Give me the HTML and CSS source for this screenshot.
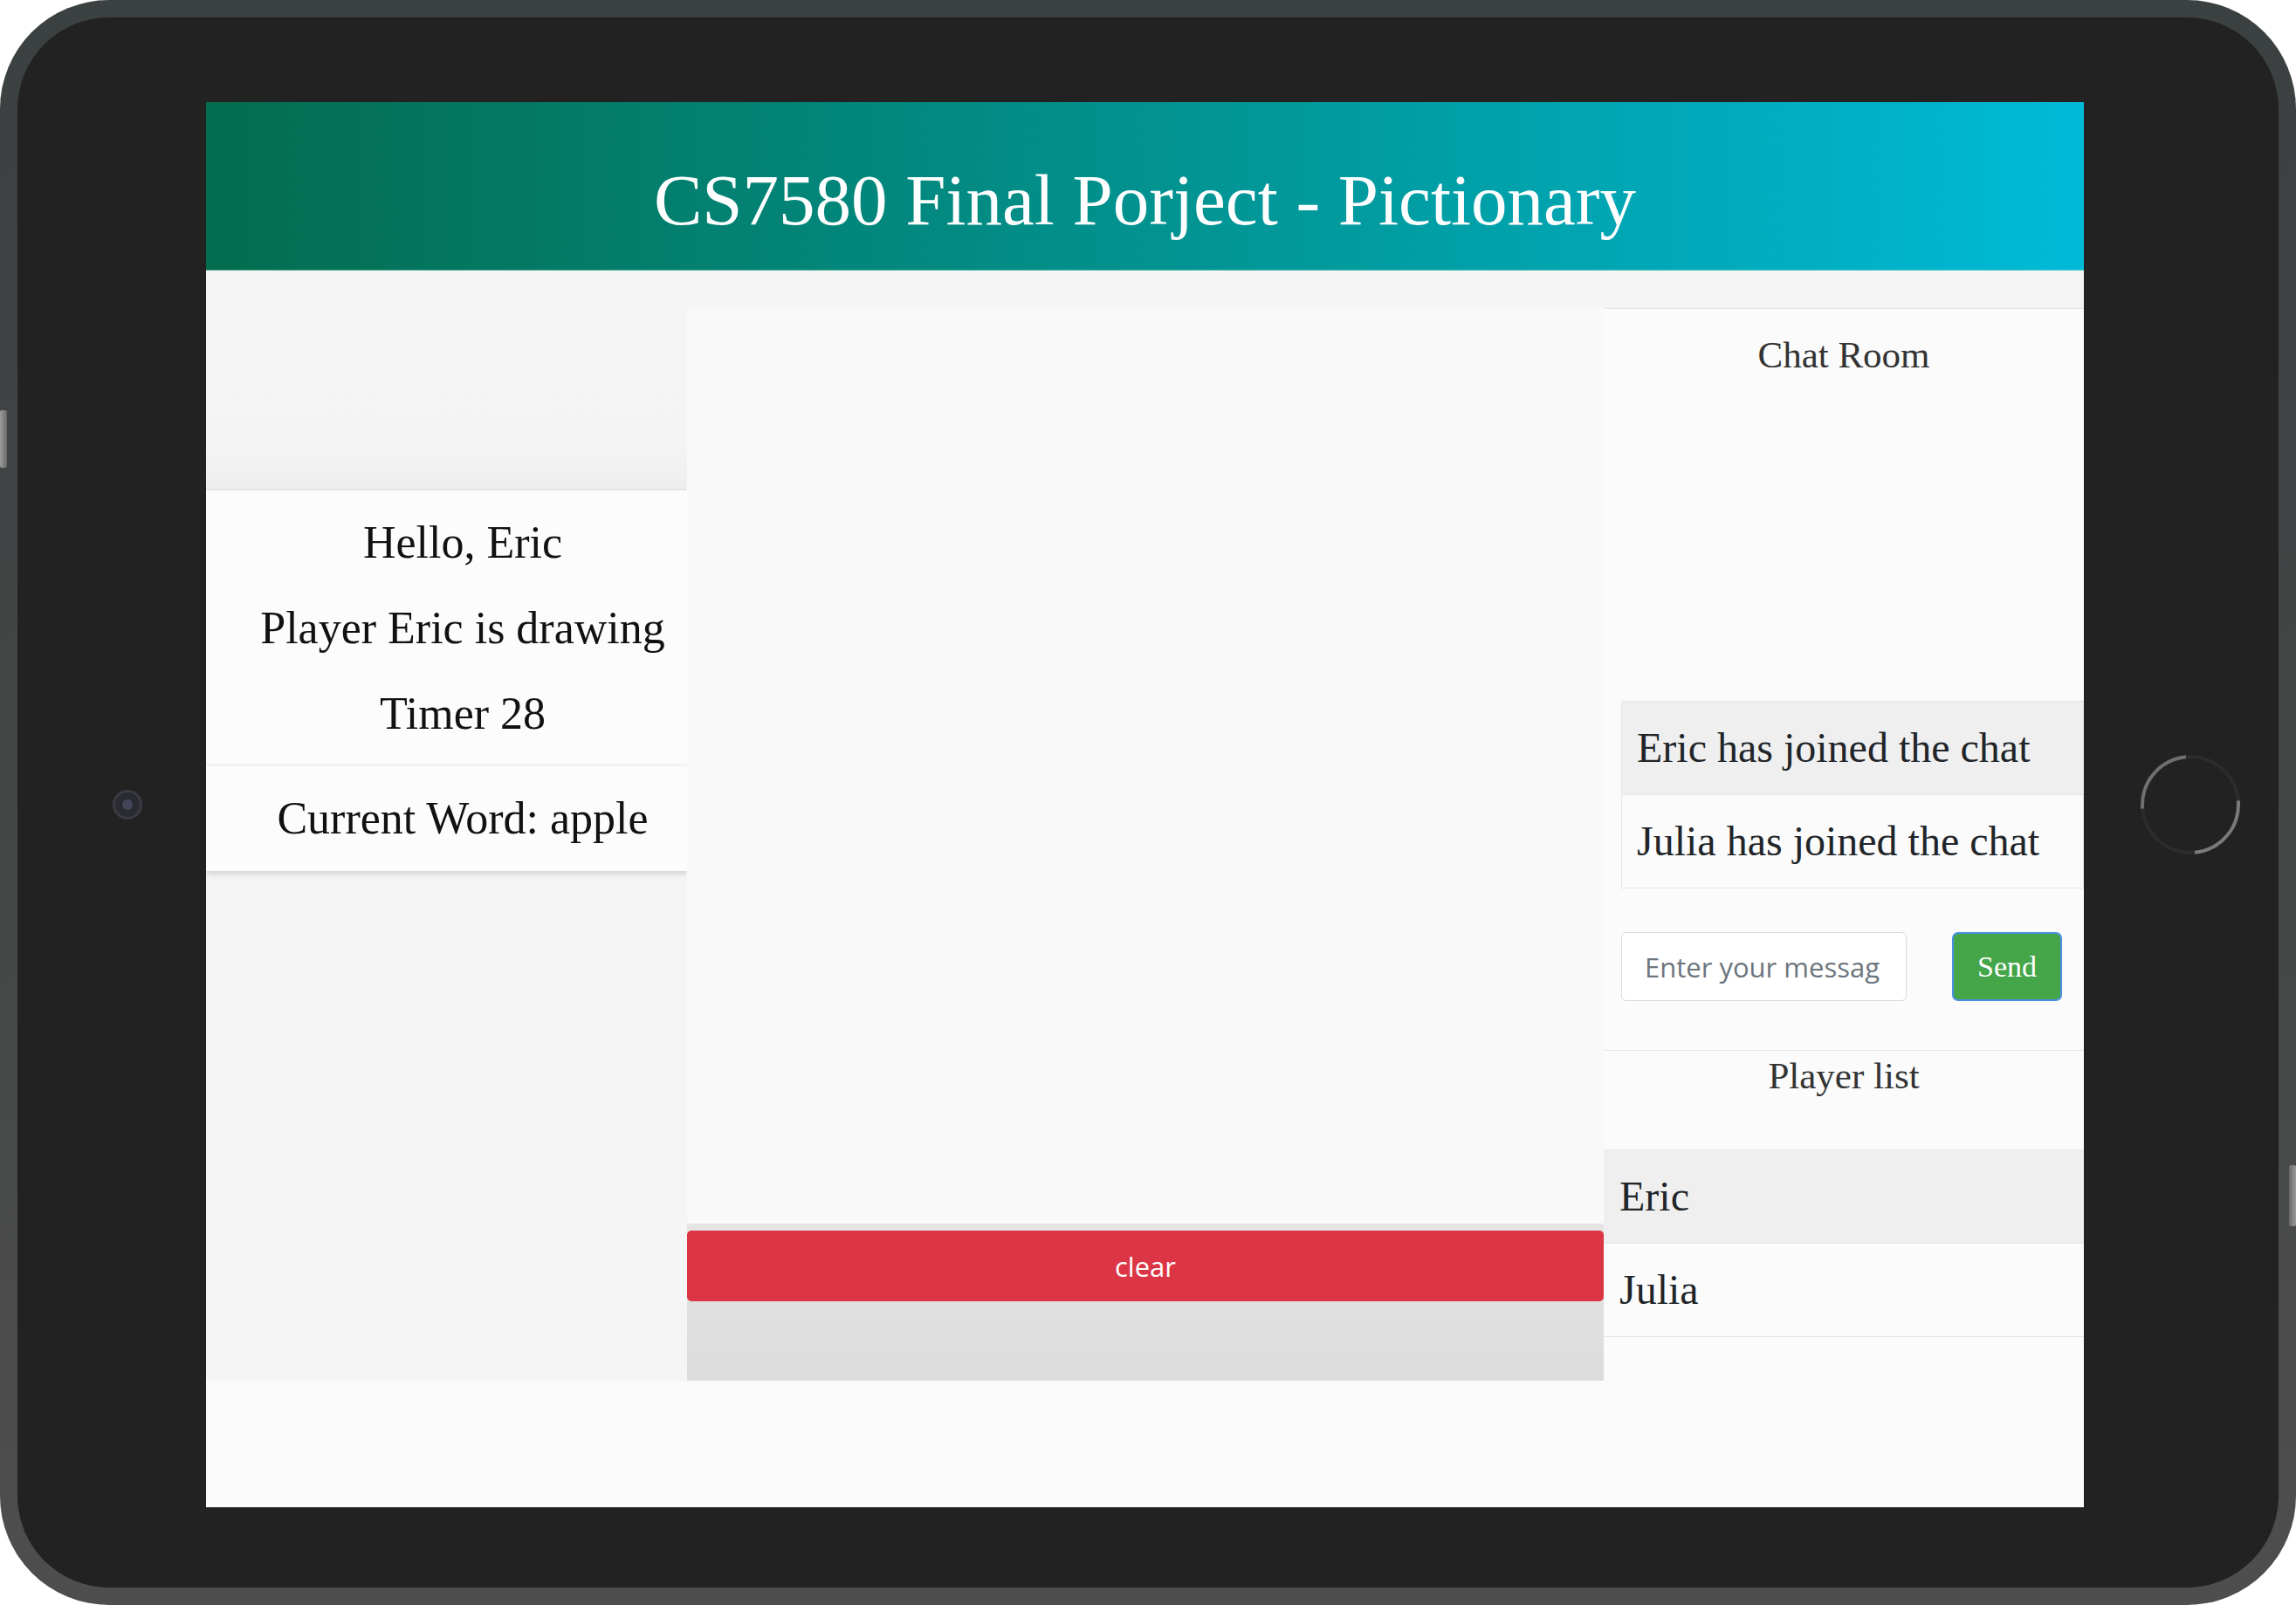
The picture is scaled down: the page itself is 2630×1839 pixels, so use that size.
FILE: index.html
```html
<!DOCTYPE html>
<html lang="en">
<head>
<meta charset="utf-8">
<title>CS7580 Final Porject - Pictionary</title>
<link rel="stylesheet" href="styles.css">
</head>
<body>
<div class="device">
  <span class="hw-btn hw-btn-left"></span>
  <span class="hw-btn hw-btn-right"></span>
  <div class="bezel">
    <div class="bezel-side bezel-left"><span class="camera"><span class="lens"></span></span></div>
    <div class="screen">
      <header class="app-header">
        <h1 class="app-title">CS7580 Final Porject - Pictionary</h1>
      </header>
      <main class="game">
        <section class="info-col">
          <div class="info-spacer"></div>
          <div class="info-card status-card">
            <p class="info-line">Hello, Eric</p>
            <p class="info-line">Player Eric is drawing</p>
            <p class="info-line">Timer 28</p>
          </div>
          <div class="info-card word-card">
            <p class="info-line word-line">Current Word: apple</p>
          </div>
        </section>
        <section class="draw-col">
          <div class="canvas-area"></div>
          <div class="tool-bar"><button class="btn-clear" type="button">clear</button></div>
        </section>
        <aside class="side-col">
          <div class="side-panel">
            <div class="chat">
              <h2 class="panel-title chat-title">Chat Room</h2>
              <ul class="msg-list">
                <li class="msg msg-alt">Eric has joined the chat</li>
                <li class="msg">Julia has joined the chat</li>
              </ul>
              <form class="chat-form">
                <input class="chat-input" type="text" placeholder="Enter your message">
                <button class="btn-send" type="button">Send</button>
              </form>
            </div>
            <div class="players">
              <h2 class="panel-title players-title">Player list</h2>
              <ul class="player-list">
                <li class="player player-alt">Eric</li>
                <li class="player">Julia</li>
              </ul>
            </div>
          </div>
        </aside>
      </main>
    </div>
    <div class="bezel-side bezel-right"><span class="home-btn"></span></div>
  </div>
</div>
</body>
</html>
```

FILE: styles.css
```css
* { box-sizing: border-box; }

html, body {
  margin: 0;
  padding: 0;
  background: #ffffff;
}

body {
  width: 2630px;
  height: 1839px;
  overflow: hidden;
  font-family: "Liberation Serif", "Times New Roman", serif;
}

.device {
  position: relative;
  width: 2630px;
  height: 1839px;
  padding: 20px;
  border-radius: 125px;
  background: linear-gradient(180deg, #3b4040 0%, #444646 50%, #4e4e4e 100%);
}

.hw-btn {
  position: absolute;
  width: 8px;
  border-radius: 2px;
}

.hw-btn-left {
  left: 0;
  top: 470px;
  height: 66px;
  background: linear-gradient(90deg, #9a9a9a, #6a6a6a);
}

.hw-btn-right {
  right: 0;
  top: 1335px;
  height: 70px;
  background: linear-gradient(90deg, #6a6a6a, #9a9a9a);
}

.bezel {
  display: flex;
  height: 1799px;
  padding: 97px 0 92px 0;
  border-radius: 105px;
  background: #222222;
}

.bezel-side {
  display: flex;
  align-items: center;
  justify-content: center;
}

.bezel-left {
  width: 216px;
  padding-left: 36px;
}

.bezel-right {
  flex: 1;
  padding-left: 21px;
}

.camera {
  display: flex;
  align-items: center;
  justify-content: center;
  width: 34px;
  height: 34px;
  border-radius: 50%;
  border: 3px solid #3a3a44;
  background: #2a2a31;
}

.lens {
  width: 12px;
  height: 12px;
  border-radius: 50%;
  background: #45455a;
}

.home-btn {
  width: 114px;
  height: 114px;
  border-radius: 50%;
  border: 4px solid;
  border-color: #6f6f6f #2c2c2c #7a7a7a #2c2c2c;
  transform: rotate(-50deg);
}

.screen {
  display: flex;
  flex-direction: column;
  width: 2151px;
  background: #fafafa;
  overflow: hidden;
}

/* header */
.app-header {
  height: 193px;
  padding-top: 70px;
  background: linear-gradient(90deg, #046c4e 0%, #02928f 50%, #00bad8 100%);
  border-bottom: 1px solid rgba(140, 220, 190, 0.5);
}

.app-title {
  margin: 0;
  font-family: "Liberation Serif", "Times New Roman", serif;
  font-weight: normal;
  font-size: 83px;
  line-height: 84px;
  color: #ffffff;
  text-align: center;
}

/* main */
.game {
  display: flex;
  align-items: flex-start;
  flex: 1;
}

.info-col {
  width: 551px;
  height: 1272px;
  background: #f5f5f5;
}

.info-spacer {
  height: 252px;
  background: linear-gradient(180deg, #f5f5f5 0%, #f4f4f4 80%, #eeeeee 100%);
}

.info-card {
  background: #fcfcfc;
  padding-left: 37px;
}

.status-card {
  padding-top: 11px;
  padding-bottom: 8px;
  box-shadow: 0 -1px 3px rgba(0, 0, 0, 0.08);
}

.word-card {
  margin-top: 3px;
  box-shadow: 0 4px 6px rgba(0, 0, 0, 0.13);
}

.info-line {
  margin: 0;
  font-size: 52px;
  line-height: 98px;
  color: #111111;
  text-align: center;
}

.word-line {
  line-height: 120px;
}

.draw-col {
  width: 1050px;
  height: 1272px;
  padding-top: 43px;
  background: #f5f5f5;
}

.canvas-area {
  height: 1049px;
  background: #f9f9f9;
}

.tool-bar {
  height: 180px;
  padding-top: 8px;
  background: linear-gradient(180deg, #e4e4e4 0%, #dcdcdc 100%);
}

.btn-clear {
  display: block;
  width: 100%;
  height: 81px;
  border: 0;
  border-radius: 5px;
  background: #dc3545;
  color: #ffffff;
  font-family: "Open Sans", "Noto Sans", sans-serif;
  font-size: 31px;
}

.side-col {
  display: flex;
  flex-direction: column;
  width: 550px;
  align-self: stretch;
  padding-top: 43px;
  background: #f5f5f5;
}

.side-panel {
  flex: 1;
  background: #fbfbfb;
  border-top: 1px solid #e4e4e4;
}

.panel-title {
  margin: 0;
  font-weight: normal;
  font-size: 43px;
  line-height: 50px;
  color: #333333;
  text-align: center;
}

.chat-title {
  padding-top: 28px;
}

.msg-list {
  list-style: none;
  margin: 371px 0 0 20px;
  padding: 0;
}

.msg {
  padding: 25px 17px;
  font-size: 48px;
  line-height: 56px;
  color: #212529;
  border: 1px solid #e4e6e8;
  background: #fbfbfb;
  white-space: nowrap;
}

.msg + .msg {
  border-top: 0;
}

.msg-alt {
  background: #efefef;
}

.chat-form {
  display: flex;
  align-items: stretch;
  margin: 50px 0 0 20px;
  height: 79px;
}

.chat-input {
  width: 327px;
  height: 79px;
  margin: 0;
  padding: 0 30px 0 26px;
  border: 1px solid #d6dbdf;
  border-radius: 6px;
  background: #ffffff;
  font-family: "Open Sans", "Noto Sans", sans-serif;
  font-size: 31px;
  color: #495057;
}

.chat-input::placeholder {
  color: #6c757d;
  opacity: 1;
}

.btn-send {
  width: 126px;
  height: 79px;
  margin-left: 52px;
  border: 2px solid #4a8fe2;
  border-radius: 7px;
  background: #45a649;
  color: #ffffff;
  font-family: "Liberation Serif", "Times New Roman", serif;
  font-size: 34px;
}

.players {
  margin-top: 56px;
  border-top: 1px solid #e5e7e8;
}

.players-title {
  padding-top: 4px;
}

.player-list {
  list-style: none;
  margin: 59px 0 0 0;
  padding: 0;
}

.player {
  padding: 25px 18px;
  font-size: 48px;
  line-height: 56px;
  color: #212529;
  border-bottom: 1px solid #e2e6e8;
  background: #fbfbfb;
}

.player:first-child {
  border-top: 1px solid #e6e8ea;
}

.player-alt {
  background: #efefef;
}
```
